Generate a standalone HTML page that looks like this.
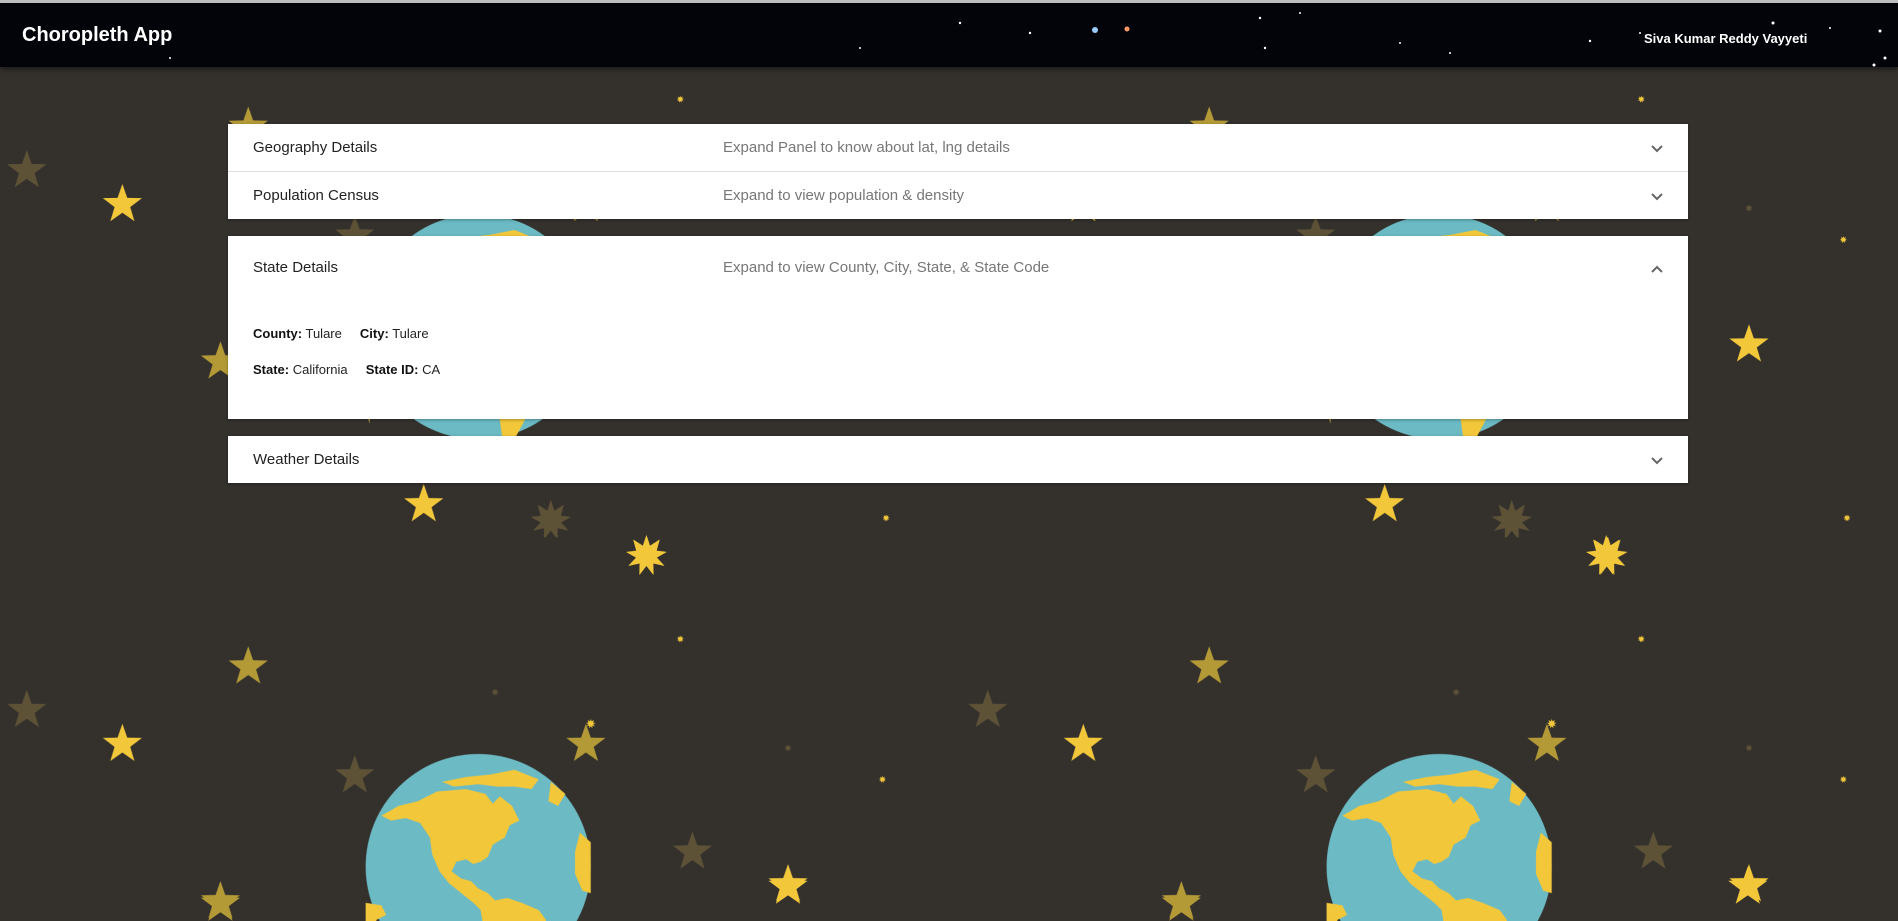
<!DOCTYPE html>
<html><head><meta charset="utf-8"><style>
html,body{margin:0;padding:0;width:1898px;height:921px;overflow:hidden;background:#34312d;font-family:"Liberation Sans",Arial,sans-serif}
#bg{position:absolute;left:0;top:0}
.hdr{position:absolute;left:0;top:0;width:1898px;height:67px;background:#03040a;border-top:3px solid #bdbdbd;box-sizing:border-box;box-shadow:0 2px 5px rgba(0,0,0,.5)}
.hdr .t{position:absolute;left:22px;top:21px;color:#fff;font-weight:bold;font-size:20px}
.hdr .n{position:absolute;left:1644px;top:28px;color:#fff;font-weight:bold;font-size:13px}
.p{position:absolute;left:228px;width:1460px;background:#fff;box-shadow:0 1px 3px rgba(0,0,0,.3)}
.row{position:relative;height:47px;font-size:15px;color:#222}
.row .a{position:absolute;left:25px;top:15px}
.row .b{position:absolute;left:495px;top:15px;color:#777}
.row svg{position:absolute;left:1422px;top:20px}
.kv{position:absolute;left:25px;font-size:13px;color:#222}
.kv b{color:#111}
</style></head><body>
<svg id="bg" width="1898" height="921" viewBox="0 0 1568 761">
<defs>
<polygon id="s" points="0,-1 0.235,-0.324 0.951,-0.309 0.38,0.124 0.588,0.809 0,0.4 -0.588,0.809 -0.38,0.124 -0.951,-0.309 -0.235,-0.324"/>
<polygon id="b" points="0,-1 .17,-.47 .64,-.77 .49,-.23 .98,-.17 .5,.1 .87,.5 .33,.38 .34,.94 0,.5 -.34,.94 -.33,.38 -.87,.5 -.5,.1 -.98,-.17 -.49,-.23 -.64,-.77 -.17,-.47"/>
<g id="g">
<circle r="93" fill="#6bbac4"/>
<path fill="#f2c73a" d="M-80,-42 L-66,-50 L-50,-54 L-34,-62 L-10,-64 L6,-60 L12,-52 L18,-58 L28,-50 L34,-38 L26,-34 L22,-24 L12,-18 L8,-8 L2,-4 L-4,-2 L-10,-6 L-18,-4 L-22,4 L-14,10 L-6,12 L0,18 L8,22 L14,28 L24,26 L36,30 L50,36 L56,44 L54,56 L44,64 L38,78 L30,93 L20,93 L18,78 L14,62 L4,48 L2,36 L-4,30 L-14,22 L-24,14 L-32,4 L-38,-10 L-40,-24 L-48,-36 L-60,-40 L-72,-38 Z"/>
<path fill="#f2c73a" d="M-30,-70 L-10,-74 L10,-76 L30,-80 L50,-72 L44,-64 L30,-66 L16,-66 L0,-68 L-20,-66 Z"/>
<path fill="#f2c73a" d="M60,-70 L72,-60 L66,-50 L58,-54 Z"/>
<path fill="#f2c73a" d="M84,-28 L93,-20 L93,22 L86,20 L80,6 L80,-12 Z"/>
<path fill="#f2c73a" d="M-93,30 L-80,32 L-76,40 L-84,44 L-88,60 L-90,80 L-93,60 Z"/>
</g>
<pattern id="pt" x="0" y="-2" width="794" height="446" patternUnits="userSpaceOnUse">
<use href="#g" x="395" y="272"/>
<g fill="#f2c73a">
<use href="#s" transform="translate(101,171) scale(17)"/>
<use href="#s" transform="translate(350,419) scale(17)"/>
<use href="#s" transform="translate(651,287) scale(17)"/>
<use href="#b" transform="translate(534,15) scale(17)"/>
<use href="#b" transform="translate(732,430) scale(3)"/>
<use href="#b" transform="translate(729,200) scale(3)"/>
<use href="#b" transform="translate(562,84) scale(3)"/>
<use href="#b" transform="translate(488,154) scale(4)"/>
</g>
<g fill="#b49a36">
<use href="#s" transform="translate(205,107) scale(17)"/>
<use href="#s" transform="translate(182,301) scale(17)"/>
<use href="#s" transform="translate(484,171) scale(17)"/>
</g>
<g fill="#5e5236">
<use href="#s" transform="translate(22,143) scale(17)"/>
<use href="#s" transform="translate(293,197) scale(17)"/>
<use href="#s" transform="translate(572,260) scale(17)"/>
<use href="#b" transform="translate(455,432) scale(17)"/>
<use href="#b" transform="translate(409,128) scale(3)"/>
<use href="#b" transform="translate(651,174) scale(3)"/>
</g>
</pattern>
</defs>
<rect width="1568" height="761" fill="#34312d"/>
<rect width="1568" height="761" fill="url(#pt)"/>
<g fill="#f2c73a"><use href="#s" transform="translate(651,733) scale(17)"/><use href="#s" transform="translate(1444,733) scale(17)"/><use href="#b" transform="translate(534,459) scale(17)"/><use href="#b" transform="translate(1327,459) scale(17)"/></g>
<g fill="#b49a36"><use href="#s" transform="translate(182,747) scale(17)"/><use href="#s" transform="translate(976,747) scale(17)"/></g>
</svg>
<div class="hdr"><div class="t">Choropleth App</div><div class="n">Siva Kumar Reddy Vayyeti</div>
<svg width="1898" height="64" style="position:absolute;left:0;top:0" fill="#fff"><circle cx="1095" cy="27" r="3" fill="#9cf"/><circle cx="1127" cy="26" r="2.5" fill="#f96"/><circle cx="960" cy="20" r="1.2"/><circle cx="1030" cy="30" r="1.2"/><circle cx="1260" cy="15" r="1.2"/><circle cx="1265" cy="45" r="1.2"/><circle cx="1590" cy="38" r="1.2"/><circle cx="1773" cy="20" r="1.5"/><circle cx="1880" cy="28" r="1.5"/><circle cx="1885" cy="55" r="1.5"/><circle cx="1874" cy="62" r="1.5"/><circle cx="1300" cy="10" r="1"/><circle cx="1400" cy="40" r="1"/><circle cx="170" cy="55" r="1"/><circle cx="860" cy="45" r="1"/><circle cx="1450" cy="50" r="1"/><circle cx="1640" cy="30" r="1"/><circle cx="1830" cy="25" r="1"/></svg></div>

<div class="p" style="top:124px">
<div class="row"><span class="a">Geography Details</span><span class="b">Expand Panel to know about lat, lng details</span><svg width="14" height="10"><path d="M2 2 L7 7 L12 2" stroke="#666" stroke-width="2" fill="none"/></svg></div>
<div style="height:1px;background:#ddd"></div>
<div class="row"><span class="a">Population Census</span><span class="b">Expand to view population &amp; density</span><svg width="14" height="10"><path d="M2 2 L7 7 L12 2" stroke="#666" stroke-width="2" fill="none"/></svg></div>
</div>
<div class="p" style="top:236px;height:183px">
<div class="row" style="height:60px"><span class="a" style="top:23px">State Details</span><span class="b" style="top:23px">Expand to view County, City, State, &amp; State Code</span><svg width="14" height="10" style="top:28px"><path d="M2 8 L7 3 L12 8" stroke="#666" stroke-width="2" fill="none"/></svg></div>
<div class="kv" style="top:90px"><b>County:</b> Tulare &nbsp;&nbsp;&nbsp; <b>City:</b> Tulare</div>
<div class="kv" style="top:126px"><b>State:</b> California &nbsp;&nbsp;&nbsp; <b>State ID:</b> CA</div>
</div>
<div class="p" style="top:436px">
<div class="row"><span class="a">Weather Details</span><svg width="14" height="10"><path d="M2 2 L7 7 L12 2" stroke="#666" stroke-width="2" fill="none"/></svg></div>
</div>
</body></html>
